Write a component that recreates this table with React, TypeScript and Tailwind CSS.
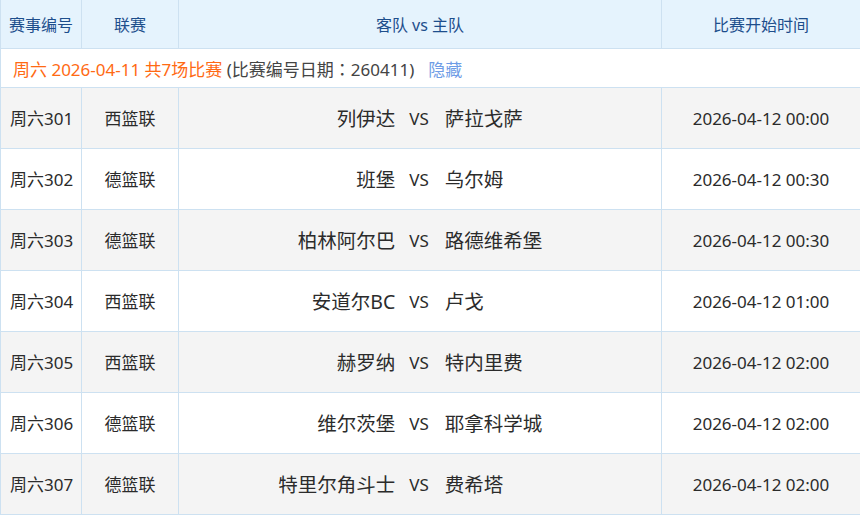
import React from "react";

const rows = [
  ["周六301", "西篮联", "列伊达", "萨拉戈萨", "2026-04-12 00:00"],
  ["周六302", "德篮联", "班堡", "乌尔姆", "2026-04-12 00:30"],
  ["周六303", "德篮联", "柏林阿尔巴", "路德维希堡", "2026-04-12 00:30"],
  ["周六304", "西篮联", "安道尔BC", "卢戈", "2026-04-12 01:00"],
  ["周六305", "西篮联", "赫罗纳", "特内里费", "2026-04-12 02:00"],
  ["周六306", "德篮联", "维尔茨堡", "耶拿科学城", "2026-04-12 02:00"],
  ["周六307", "德篮联", "特里尔角斗士", "费希塔", "2026-04-12 02:00"],
];

export default function App() {
  return (
    <div
      className="w-[860px] h-[515px] overflow-hidden bg-white text-[17px] text-[#2b2b2b]"
      style={{ fontFamily: '"Noto Sans", "Noto Sans CJK SC", sans-serif' }}
    >
      <table className="w-[860px] table-fixed border-collapse">
        <colgroup>
          <col className="w-[81px]" />
          <col className="w-[97px]" />
          <col className="w-[483px]" />
          <col className="w-[199px]" />
        </colgroup>
        <thead>
          <tr className="h-[48px] bg-[#e5f3fd] text-[#1d4e8c] text-[16px]">
            <th className="border-x border-b border-[#cde1f1] font-normal p-0 pt-[2px] text-center">赛事编号</th>
            <th className="border-x border-b border-[#cde1f1] font-normal p-0 pt-[2px] text-center">联赛</th>
            <th className="border-x border-b border-[#cde1f1] font-normal p-0 pt-[2px] text-center">客队 vs 主队</th>
            <th className="border-x border-b border-[#cde1f1] font-normal p-0 pt-[2px] text-center">比赛开始时间</th>
          </tr>
        </thead>
        <tbody>
          <tr className="h-[39px] bg-white">
            <td colSpan={4} className="border border-[#cde1f1] p-0 pl-[12px] pt-[4px] text-left whitespace-nowrap">
              <span className="text-[#ff6a13]">周六 2026-04-11 共7场比赛</span>
              <span className="text-[#444]">
                {" "}(比赛编号日期
                <span style={{ fontFamily: '"Noto Sans CJK TC", sans-serif' }}>：</span>
                260411)
              </span>
              <span className="ml-[14px] text-[#6f9de6]">隐藏</span>
            </td>
          </tr>
          {rows.map((r, i) => (
            <tr key={r[0]} className={`h-[61px] ${i % 2 === 0 ? "bg-[#f4f4f4]" : "bg-white"}`}>
              <td className="border border-[#cde1f1] p-0 pt-[2px] pl-[9px] text-left whitespace-nowrap">{r[0]}</td>
              <td className="border border-[#cde1f1] p-0 pt-[2px] text-center">{r[1]}</td>
              <td className="border border-[#cde1f1] p-0 pt-[2px]">
                <div className="flex items-center">
                  <span className="flex-1 text-right whitespace-nowrap text-[19.5px]">{r[2]}</span>
                  <span className="pl-[14px] pr-[16px]">VS</span>
                  <span className="flex-1 text-left whitespace-nowrap text-[19.5px]">{r[3]}</span>
                </div>
              </td>
              <td className="border border-[#cde1f1] p-0 pt-[2px] text-center whitespace-nowrap">{r[4]}</td>
            </tr>
          ))}
        </tbody>
      </table>
    </div>
  );
}
